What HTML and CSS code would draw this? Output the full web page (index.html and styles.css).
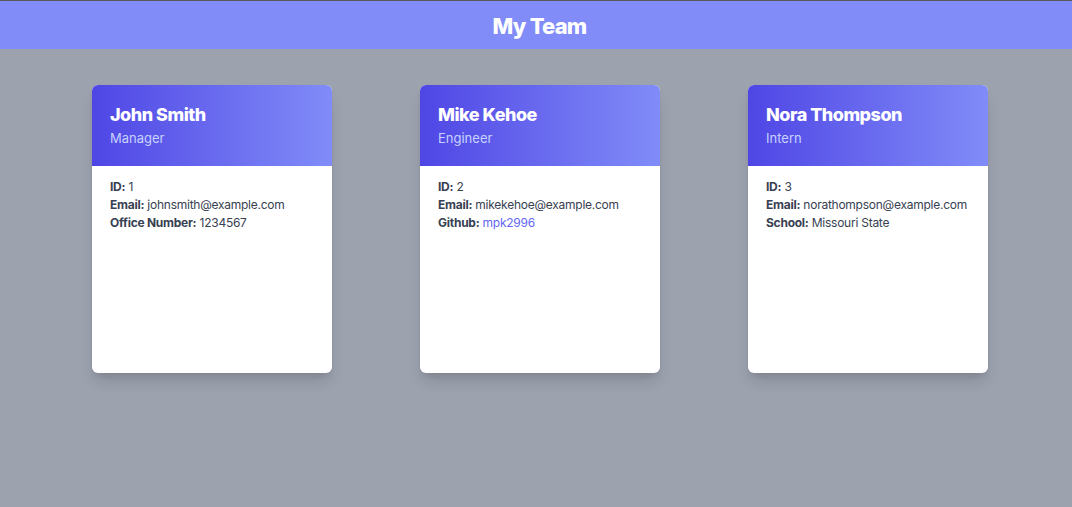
FILE: index.html
```html
<!DOCTYPE html>
<html>
<head>
<meta charset="utf-8">
<link rel="stylesheet" href="styles.css">
</head>
<body>
<header class="topbar"><h1 class="title">My Team</h1></header>
<main class="team">
  <div class="card">
    <div class="card-head"><h2 class="name">John Smith</h2><p class="role">Manager</p></div>
    <div class="card-body">
      <p><b>ID:</b> 1</p>
      <p><b>Email:</b> johnsmith@example.com</p>
      <p><b>Office Number:</b> 1234567</p>
    </div>
  </div>
  <div class="card">
    <div class="card-head"><h2 class="name">Mike Kehoe</h2><p class="role">Engineer</p></div>
    <div class="card-body">
      <p><b>ID:</b> 2</p>
      <p><b>Email:</b> mikekehoe@example.com</p>
      <p><b>Github:</b> <a class="link" href="#">mpk2996</a></p>
    </div>
  </div>
  <div class="card">
    <div class="card-head"><h2 class="name">Nora Thompson</h2><p class="role">Intern</p></div>
    <div class="card-body">
      <p><b>ID:</b> 3</p>
      <p><b>Email:</b> norathompson@example.com</p>
      <p><b>School:</b> Missouri State</p>
    </div>
  </div>
</main>
</body>
</html>
```
FILE: styles.css
```css
html, body { margin: 0; padding: 0; }
body {
  background: #9ca3af;
  font-family: Inter, "Noto Sans", sans-serif;
  height: 507px;
  border-top: 1px solid #5a5a5a;
  box-sizing: border-box;
}
.topbar {
  background: #818cf8;
  height: 48px;
  box-sizing: border-box;
  padding: 1px 0 0 7px;
  display: flex;
  align-items: center;
  justify-content: center;
}
.title {
  margin: 0;
  color: #fff;
  font-size: 22px;
  font-weight: 800;
  letter-spacing: -0.8px;
}
.team {
  display: flex;
  gap: 88px;
  padding: 36px 0 0 92px;
}
.card {
  width: 240px;
  height: 288px;
  background: #fff;
  border-radius: 6px;
  overflow: hidden;
  box-shadow: 0 10px 15px -3px rgba(0,0,0,0.15), 0 4px 6px -2px rgba(0,0,0,0.08);
}
.card-head {
  height: 81px;
  box-sizing: border-box;
  padding: 19px 18px 0;
  background: linear-gradient(to right, #4f46e5, #818cf8);
}
.name {
  margin: 0;
  color: #fff;
  font-size: 18px;
  font-weight: 800;
  letter-spacing: -0.5px;
  line-height: 22px;
}
.role {
  margin: 0;
  margin-top: 2px;
  color: #c7d2fe;
  font-size: 13px;
  line-height: 20px;
}
.card-body {
  padding: 12px 18px;
  color: #374151;
  font-size: 12px;
  line-height: 18px;
  letter-spacing: -0.25px;
}
.card-body p { margin: 0; }
.card-body b { font-weight: 700; }
.link { color: #6366f1; text-decoration: none; }
```
